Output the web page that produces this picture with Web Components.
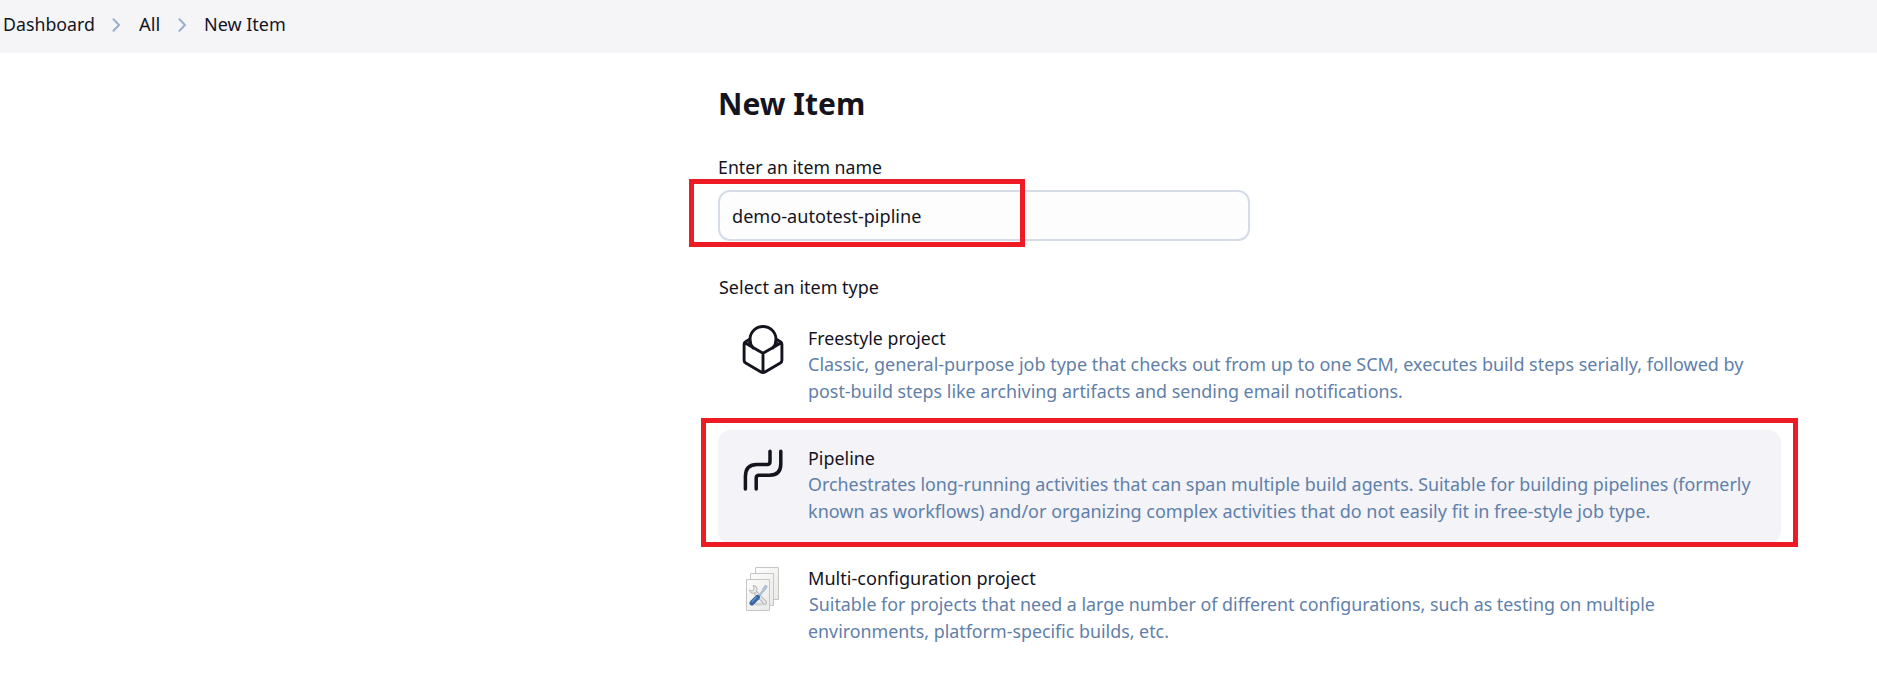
<!DOCTYPE html>
<html lang="en">
<head>
<meta charset="utf-8">
<title>New Item</title>
<style>
body{margin:0;background:#fff;color:#14141f;font:18.5px/27px "Noto Sans","Open Sans",sans-serif;height:685px;overflow:hidden}
</style>
</head>
<body>
<new-item-page></new-item-page>
<script>
const define = (name, html, setup) => {
  const template = document.createElement('template');
  template.innerHTML = html;
  customElements.define(name, class extends HTMLElement {
    constructor() {
      super();
      this.attachShadow({ mode: 'open' }).append(template.content.cloneNode(true));
    }
    connectedCallback() { if (setup) setup(this); }
  });
};

/* One line of text, condensed so that its ink fills the given width. */
define('text-line', `<style>:host{display:block;white-space:nowrap;font-kerning:normal;transform-origin:0 0}</style><slot></slot>`, el => {
  const text = el.textContent, style = getComputedStyle(el);
  const ctx = document.createElement('canvas').getContext('2d');
  ctx.font = `${style.fontWeight} ${style.fontSize} ${style.fontFamily}`;
  const m = ctx.measureText(text);
  const ink = m.actualBoundingBoxRight + m.actualBoundingBoxLeft;
  const width = +el.getAttribute('width');
  el.style.width = width + 'px';
  el.style.textIndent = m.actualBoundingBoxLeft.toFixed(2) + 'px';
  el.style.transform = `scaleX(${(width / ink).toFixed(4)})`;
});

define('crumb-arrow', `<style>:host{display:block;width:9px;height:14px}svg{display:block}</style>
<svg width="9" height="14" viewBox="0 0 9 14"><path d="M1.5 1.3 7 7 1.5 12.7" fill="none" stroke="#98b0cd" stroke-width="2" stroke-linecap="round" stroke-linejoin="round"/></svg>`);

define('bread-crumbs', `<style>
:host{display:flex;align-items:center;height:53px;box-sizing:border-box;padding:0 0 6px 4px;background:#f5f5f8}
crumb-arrow{margin:3px 18.5px 0 18px}
</style>
<text-line width="89.5">Dashboard</text-line><crumb-arrow></crumb-arrow>
<text-line width="20.5">All</text-line><crumb-arrow></crumb-arrow>
<text-line width="79.5">New Item</text-line>`);

define('name-field', `<style>
:host{display:block;box-sizing:border-box;width:532px;height:51px;border:2px solid #d5dce8;border-radius:12px;background:#fdfdfd;line-height:47px;padding-left:13px}
</style><slot></slot>`);

define('mark-frame', `<style>:host{display:block;position:absolute;box-sizing:border-box;border:5px solid #ed1c24;pointer-events:none}</style>`);

define('icon-freestyle', `<style>:host,svg{display:block}</style>
<svg width="48" height="56" viewBox="21 12 48 56" fill="none" stroke="#14141f" stroke-width="2.9" stroke-linejoin="round" stroke-linecap="round">
<path d="M35.2 38A13 13 0 1 1 54.8 38"/>
<path d="M31.8 29.2 27.5 31.8Q26.1 32.6 26.1 34.2V50.2Q26.1 52 27.7 52.9L43 62Q45 63.2 47 62L62.3 52.9Q63.9 52 63.9 50.2V34.2Q63.9 32.6 62.5 31.8L58.2 29.2M27.2 33 45 43.3 62.8 33M45 43.3V62.5"/>
<path d="m30.2 33.2 2.3-1.4M59.8 33.2l-2.3-1.4" stroke-width="1.6"/>
</svg>`);

define('icon-pipeline', `<style>:host,svg{display:block}</style>
<svg width="48" height="56" viewBox="21 12 48 56" fill="none" stroke="#14141f" stroke-width="3.5" stroke-linecap="round">
<path d="M27.4 59V46.5Q27.4 34.5 39 34.5H49Q52 34.5 52 31.5V21.2M38.2 59V48Q38.2 45.2 41 45.2H51.5Q62.8 45.2 62.8 34V21.2"/>
</svg>`);

define('icon-matrix', `<style>:host,svg{display:block}</style>
<svg width="48" height="56" viewBox="21 12 48 56">
<defs><linearGradient id="p" x2="1" y2="1"><stop stop-color="#fdfdfd"/><stop offset="1" stop-color="#e9e9e7"/></linearGradient></defs>
<g fill="url(#p)" stroke="#c6c6c4"><path d="M37.5 17.5h23v32h-23z"/><path d="M32.5 23.5h23v32h-23z"/><path d="M28.5 29.5h23v31h-23z"/></g>
<ellipse cx="40" cy="54.2" rx="9" ry="1.5" fill="#d5d5d3"/>
<path d="m37 42 10 10.5" stroke="#aaa" stroke-width="4" stroke-linecap="round"/>
<path d="m37 42 10 10.5" stroke="#e4e4e3" stroke-width="2.6" stroke-linecap="round"/>
<path d="M35.2 35.4q3.8.2 4 3.8 0 3.8-3.8 4.2-3.6 0-3.9-3.5l2.5 1.1 1.9-1.4-.1-1.9z" fill="#e8e8e6" stroke="#b2b2b0" stroke-width=".9"/>
<path d="m41 46 6.5-8.3" stroke="#a9bed6" stroke-width="2.4"/>
<path d="m45.6 39.7 2.2-3" stroke="#b0c3da" stroke-width="3.6" stroke-linecap="round"/>
<path d="m33.8 53 5.8-5.8" stroke="#3465a4" stroke-width="4.8" stroke-linecap="round"/>
<path d="m34 51.8 4.6-4.6" stroke="#789fcd" stroke-width="1.1" stroke-linecap="round"/>
</svg>`);

define('item-type', `<style>
:host{display:flex;box-sizing:border-box;width:1063px;height:114px;padding:14px 0 0 21px;gap:22px;border-radius:13px}
:host([selected]){background:#f3f3f8}
.icon{flex:none;width:48px;margin-top:-2px}
.title{height:26px}
.about{color:#5f80a9}
</style>
<div class="icon"><slot name="icon"></slot></div>
<div><div class="title"><slot name="title"></slot></div><div class="about"><slot></slot></div></div>`);

define('new-item-page', `<style>
:host{display:block}
main{position:relative;padding:29px 0 0 718px}
h1{margin:0;padding-left:2px;font-size:31px;line-height:42px;font-weight:700}
.label{margin:29px 0 10px 1px}
.second{margin:32px 0 10px .5px}
.types{display:flex;flex-direction:column;gap:6px}
.name{left:689px;top:126px;width:336px;height:68px}
.type{left:701px;top:365px;width:1097px;height:129px}
</style>
<bread-crumbs></bread-crumbs>
<main>
<h1><text-line width="144">New Item</text-line></h1>
<div class="label"><text-line width="162.5">Enter an item name</text-line></div>
<name-field><text-line width="188">demo-autotest-pipline</text-line></name-field>
<div class="label second"><text-line width="159.5">Select an item type</text-line></div>
<div class="types">
<item-type><icon-freestyle slot="icon"></icon-freestyle><text-line slot="title" width="137">Freestyle project</text-line>
<text-line width="935">Classic, general-purpose job type that checks out from up to one SCM, executes build steps serially, followed by</text-line>
<text-line width="593">post-build steps like archiving artifacts and sending email notifications.</text-line></item-type>
<item-type selected><icon-pipeline slot="icon"></icon-pipeline><text-line slot="title" width="65.5">Pipeline</text-line>
<text-line width="942">Orchestrates long-running activities that can span multiple build agents. Suitable for building pipelines (formerly</text-line>
<text-line width="840.5">known as workflows) and/or organizing complex activities that do not easily fit in free-style job type.</text-line></item-type>
<item-type><icon-matrix slot="icon"></icon-matrix><text-line slot="title" width="227">Multi-configuration project</text-line>
<text-line width="845.5">Suitable for projects that need a large number of different configurations, such as testing on multiple</text-line>
<text-line width="359">environments, platform-specific builds, etc.</text-line></item-type>
</div>
<mark-frame class="name"></mark-frame>
<mark-frame class="type"></mark-frame>
</main>`);
</script>
</body>
</html>
